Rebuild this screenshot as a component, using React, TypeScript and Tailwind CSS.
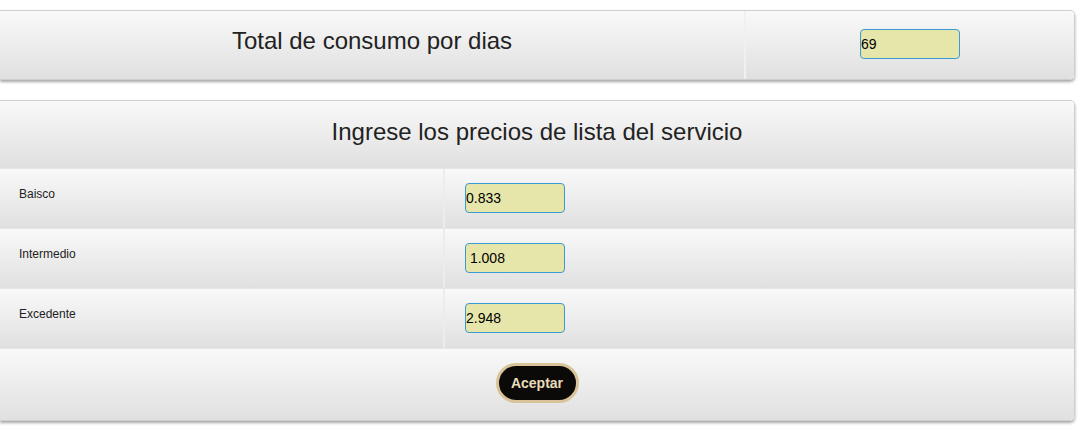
import React from "react";

const cell =
  "bg-gradient-to-b from-[#f9f9f9] to-[#e0e0e0]";

function PriceRow({ label, value }: { label: string; value: string }) {
  return (
    <div className="flex h-[60px] border-t border-t-[#e6e6e6]">
      <div className={`w-[445px] shrink-0 pl-[19px] pt-[17px] text-[12px] leading-[16px] text-[#222] border-r-2 border-r-[#ececec] ${cell}`}>
        {label}
      </div>
      <div className={`flex-1 pl-[20px] pt-[14px] ${cell}`}>
        <input
          readOnly
          value={value}
          className="w-[100px] h-[30px] rounded-[4px] border border-[#3a9bd0] bg-[#e6e6aa] px-0 text-[14px] text-black outline-none"
          style={{ fontFamily: "'Liberation Sans', Arial, sans-serif" }}
        />
      </div>
    </div>
  );
}

export default function App() {
  return (
    <div
      className="w-[1078px] h-[426px] bg-white pt-[10px]"
      style={{ fontFamily: "'Liberation Sans', Arial, sans-serif" }}
    >
      <div className="w-[1075px] h-[70px] flex border border-l-0 border-[#cfcfcf] rounded-r-[5px] overflow-hidden shadow-[0_2px_3px_rgba(0,0,0,0.35)]">
        <div className={`w-[746px] shrink-0 flex justify-center pt-[16px] border-r-2 border-r-[#f0f0f0] ${cell}`}>
          <span className="text-[24px] leading-[28px] text-[#222]">Total de consumo por dias</span>
        </div>
        <div className={`flex-1 flex justify-center pt-[18px] ${cell}`}>
          <input
            readOnly
            value="69"
            className="w-[100px] h-[30px] rounded-[4px] border border-[#3a9bd0] bg-[#e6e6aa] px-0 text-[14px] text-black outline-none"
            style={{ fontFamily: "'Liberation Sans', Arial, sans-serif" }}
          />
        </div>
      </div>

      <div className="mt-[20px] w-[1075px] h-[321px] flex flex-col border border-l-0 border-[#cfcfcf] rounded-r-[5px] overflow-hidden shadow-[0_2px_3px_rgba(0,0,0,0.35)]">
        <div className={`h-[67px] flex justify-center pt-[17px] ${cell}`}>
          <span className="text-[24px] leading-[28px] text-[#222]">Ingrese los precios de lista del servicio</span>
        </div>
        <PriceRow label="Baisco" value="0.833" />
        <PriceRow label="Intermedio" value=" 1.008" />
        <PriceRow label="Excedente" value="2.948" />
        <div className={`flex-1 flex justify-center pt-[14px] border-t border-t-[#e6e6e6] ${cell}`}>
          <button className="h-[40px] w-[83px] rounded-full border-[3px] border-[#d9c399] bg-[#0b0a08] text-[14px] font-bold text-[#eadcb8]">
            Aceptar
          </button>
        </div>
      </div>
    </div>
  );
}
